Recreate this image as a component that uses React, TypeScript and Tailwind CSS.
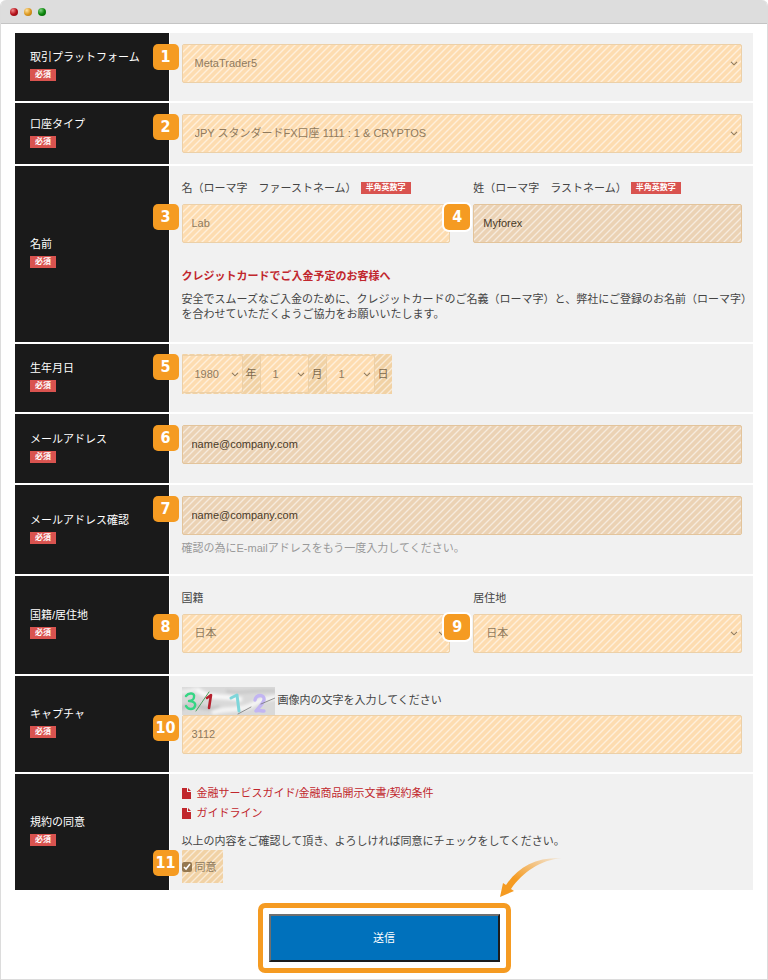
import type { ReactNode } from 'react';

const stripes =
  'bg-[image:linear-gradient(135deg,#ffffff8c_5%,transparent_9%,transparent_41%,#ffffff8c_45%,#ffffff8c_55%,transparent_59%,transparent_91%,#ffffff8c_95%)] bg-[length:7px_7px]';

const lightField = `${stripes} rounded-[2px] border border-[#ecd0a8] bg-[#fddcb0] text-[#8f7a5e]`;
const darkField = `${stripes} rounded-[2px] border border-[#e3c49b] bg-[#ebd2b4] text-[#4a3a28]`;

function StepNumber({ value, ring = false }: { value: number; ring?: boolean }) {
  return (
    <span
      className={`absolute top-0 -left-[29px] z-10 flex h-[26px] w-[26px] items-center justify-center rounded-[5px] bg-[#f59b22] font-['DejaVu_Sans_Condensed','DejaVu_Sans',sans-serif] text-[16px] leading-none font-bold text-white ${
        ring ? 'ring-2 ring-white' : ''
      }`}
    >
      {value}
    </span>
  );
}

function Tag({ children }: { children: ReactNode }) {
  return (
    <span className="inline-block bg-[#d9534f] px-[5px] text-[8px] leading-3 font-bold text-white">
      {children}
    </span>
  );
}

function Row({ label, className, children }: { label: string; className: string; children: ReactNode }) {
  return (
    <tr className="border-b-2 border-white last:border-b-0">
      <th scope="row" className="w-[154px] bg-[#1a1a1a] pb-1 pl-[15px] text-left align-middle font-normal text-white">
        <div className="mb-1 leading-4">{label}</div>
        <div className="flex">
          <Tag>必須</Tag>
        </div>
      </th>
      <td className={`border-l border-white bg-[#f1f1f1] pr-[11px] pl-3 align-top ${className}`}>{children}</td>
    </tr>
  );
}

function Chevron() {
  return (
    <svg
      viewBox="0 0 8 5"
      className="pointer-events-none absolute top-[17px] right-1 h-[5px] w-2"
      fill="none"
      stroke="#8f7a5e"
      strokeWidth="1.1"
    >
      <path d="M1 0.8l3 3 3-3" />
    </svg>
  );
}

function TextField({ id, label, value, dark = false }: { id: string; label: string; value: string; dark?: boolean }) {
  return (
    <input
      id={id}
      aria-label={label}
      defaultValue={value}
      className={`block h-[39px] w-full px-[9px] pb-px ${dark ? darkField : lightField}`}
    />
  );
}

function SelectField({ id, label, value }: { id: string; label: string; value: string }) {
  return (
    <div className="relative">
      <select id={id} aria-label={label} className={`block h-[39px] w-full appearance-none px-3 pb-px ${lightField}`}>
        <option>{value}</option>
      </select>
      <Chevron />
    </div>
  );
}

function FileIcon() {
  return (
    <svg viewBox="0 0 9 11" className="h-[11px] w-[9px]" fill="#c1272d">
      <path d="M0 0h5v4h4v7H0z" />
      <path d="M6 0l3 3H6z" />
    </svg>
  );
}

function Captcha() {
  return (
    <svg viewBox="0 0 93 28" className="h-7 w-[93px]" role="img" aria-label="3112">
      <defs>
        <filter id="soft">
          <feGaussianBlur stdDeviation="1.6" />
        </filter>
        <clipPath id="frame">
          <path d="M0 0h93v28H0z" />
        </clipPath>
      </defs>
      <rect width="93" height="28" fill="#d9d9d9" />
      <g clipPath="url(#frame)" fill="none">
        <g filter="url(#soft)">
          <path d="M-2 22C12 12 20 26 38 20" stroke="#c4c4c4" strokeWidth="4" />
          <path d="M14 2c14 12 30 5 46 11" stroke="#f8f8f8" strokeWidth="5" />
          <path d="M44 4c16 4 30-2 50 0" stroke="#c8c8c8" strokeWidth="3" />
          <path d="M30 26c12-6 28-1 40-8s14-6 26-8" stroke="#f4f4f4" strokeWidth="5" />
          <path d="M-2 6c6-4 12 0 16-5" stroke="#efefef" strokeWidth="4" />
        </g>
        <g strokeLinecap="round" strokeLinejoin="round">
          <path d="M4 9c3-4 9-3 8 1 0 3-3 4-5 4 4 0 7 2 6 5-1 4-7 4-9 0" stroke="#35d684" strokeWidth="2.4" />
          <path d="M14 24L27 5" stroke="#4e9e5f" />
          <path d="M25 11l4-3-2 13" stroke="#b5202d" strokeWidth="2.6" />
          <path d="M49 11l6-3 2 16" stroke="#7ed6da" strokeWidth="3" />
          <path d="M73 13c1-6 10-6 9 0-1 4-5 7-8 11 3-1 5 0 8 0" stroke="#c2b5f2" strokeWidth="3.4" />
          <path d="M56 27l13-7M79 17l14-6" stroke="#777777" strokeWidth="0.8" />
        </g>
      </g>
    </svg>
  );
}

function DatePart({ id, label, value, wide = false }: { id: string; label: string; value: string; wide?: boolean }) {
  return (
    <>
      <div className={`relative ${wide ? 'w-[61px]' : 'w-[49px]'}`}>
        <select id={id} className={`block h-[38px] w-full appearance-none px-3 ${lightField}`}>
          <option>{value}</option>
        </select>
        <Chevron />
      </div>
      <label htmlFor={id} className="w-[17px] text-center text-[#7d6a4f]">
        {label}
      </label>
    </>
  );
}

export default function App() {
  return (
    <div className="overflow-hidden rounded-t-md border-x border-b border-[#dcdcdc] bg-white font-['Liberation_Sans','Noto_Sans_CJK_JP',sans-serif] text-[11px] leading-4 text-[#444]">
      <header className="flex h-6 items-center gap-[6px] border-b border-[#c4c4c4] bg-[#dddddd] pl-[9px]">
        <span className="h-2 w-2 rounded-full bg-radial-[at_35%_30%] from-[#f28b8b] via-[#b5121b] to-[#7a0a10]" />
        <span className="h-2 w-2 rounded-full bg-radial-[at_35%_30%] from-[#ffe2a0] via-[#dd9a22] to-[#a86c0c]" />
        <span className="h-2 w-2 rounded-full bg-radial-[at_35%_30%] from-[#7fd07f] via-[#0c870c] to-[#075707]" />
      </header>

      <form className="px-[14px] pt-[9px]" onSubmit={(e) => e.preventDefault()}>
        <table className="w-full border-collapse">
          <tbody>
            <Row label="取引プラットフォーム" className="pt-[11px] pb-[18px]">
              <div className="relative">
                <StepNumber value={1} />
                <SelectField id="platform" label="取引プラットフォーム" value="MetaTrader5" />
              </div>
            </Row>

            <Row label="口座タイプ" className="py-[11px]">
              <div className="relative">
                <StepNumber value={2} />
                <SelectField id="account" label="口座タイプ" value="JPY スタンダードFX口座 1111 : 1 & CRYPTOS" />
              </div>
            </Row>

            <Row label="名前" className="pt-[14px] pb-5">
              <div className="grid grid-cols-2 gap-[23px]">
                <div>
                  <div className="mb-2 flex items-center gap-1">
                    <label htmlFor="first">名（ローマ字　ファーストネーム）</label>
                    <Tag>半角英数字</Tag>
                  </div>
                  <div className="relative">
                    <StepNumber value={3} />
                    <TextField id="first" label="名" value="Lab" />
                  </div>
                </div>
                <div>
                  <div className="mb-2 flex items-center gap-1">
                    <label htmlFor="last">姓（ローマ字　ラストネーム）</label>
                    <Tag>半角英数字</Tag>
                  </div>
                  <div className="relative">
                    <StepNumber value={4} ring />
                    <TextField id="last" label="姓" value="Myforex" dark />
                  </div>
                </div>
              </div>
              <p className="mt-[25px] mb-2 font-bold text-[#c1272d]">クレジットカードでご入金予定のお客様へ</p>
              <p className="-mr-[11px] leading-[15px]">
                安全でスムーズなご入金のために、クレジットカードのご名義（ローマ字）と、弊社にご登録のお名前（ローマ字）を合わせていただくようご協力をお願いいたします。
              </p>
            </Row>

            <Row label="生年月日" className="pt-[10px] pb-[18px]">
              <div className="relative">
                <StepNumber value={5} />
                <div className={`flex w-fit items-center bg-[#f1d2a5] py-px ${stripes}`}>
                  <DatePart id="year" label="年" value="1980" wide />
                  <DatePart id="month" label="月" value="1" />
                  <DatePart id="day" label="日" value="1" />
                </div>
              </div>
            </Row>

            <Row label="メールアドレス" className="pt-[11px] pb-[19px]">
              <div className="relative">
                <StepNumber value={6} />
                <TextField id="mail" label="メールアドレス" value="name@company.com" dark />
              </div>
            </Row>

            <Row label="メールアドレス確認" className="pt-[11px] pb-[18px]">
              <div className="relative">
                <StepNumber value={7} />
                <TextField id="mail2" label="メールアドレス確認" value="name@company.com" dark />
              </div>
              <p className="mt-[5px] text-[#999]">確認の為にE-mailアドレスをもう一度入力してください。</p>
            </Row>

            <Row label="国籍/居住地" className="pt-[14px] pb-[21px]">
              <div className="grid grid-cols-2 gap-[23px]">
                <div>
                  <label htmlFor="nation" className="mb-2 block">
                    国籍
                  </label>
                  <div className="relative">
                    <StepNumber value={8} />
                    <SelectField id="nation" label="国籍" value="日本" />
                  </div>
                </div>
                <div>
                  <label htmlFor="live" className="mb-2 block">
                    居住地
                  </label>
                  <div className="relative">
                    <StepNumber value={9} ring />
                    <SelectField id="live" label="居住地" value="日本" />
                  </div>
                </div>
              </div>
            </Row>

            <Row label="キャプチャ" className="pt-[11px] pb-[18px]">
              <div className="flex items-center gap-[3px]">
                <Captcha />
                <label htmlFor="captcha" className="pb-[2px]">
                  画像内の文字を入力してください
                </label>
              </div>
              <div className="relative">
                <StepNumber value={10} />
                <TextField id="captcha" label="キャプチャ" value="3112" />
              </div>
            </Row>

            <Row label="規約の同意" className="pt-[11px] pb-[7px]">
              <a href="#guide" className="mb-1 flex w-fit items-center gap-[6px] text-[#c1272d]">
                <FileIcon />
                金融サービスガイド/金融商品開示文書/契約条件
              </a>
              <a href="#guideline" className="mb-3 flex w-fit items-center gap-[6px] text-[#c1272d]">
                <FileIcon />
                ガイドライン
              </a>
              <p className="mb-px">以上の内容をご確認して頂き、よろしければ同意にチェックをしてください。</p>
              <div className="relative">
                <StepNumber value={11} />
                <label className={`flex h-[33px] w-[41px] items-center gap-[3px] bg-[#f1d2a5] text-[#8f7a5e] ${stripes}`}>
                  <input type="checkbox" defaultChecked className="h-[10px] w-[10px] accent-[#957850]" />
                  同意
                </label>
              </div>
            </Row>
          </tbody>
        </table>

        <div className="relative mx-auto mt-[13px] mb-[6px] w-[253px] rounded-[7px] border-[5px] border-[#f59b22] p-[6px]">
          <button
            type="submit"
            className="block h-12 w-full border-2 border-t-[#6f6f6f] border-r-[#1c1c1c] border-b-[#1c1c1c] border-l-[#6f6f6f] bg-[#0071bc] text-white"
          >
            送信
          </button>
          <svg viewBox="0 0 62 42" className="absolute -top-[51px] -right-[56px] h-[42px] w-[62px]">
            <defs>
              <linearGradient id="tail" x1="0" y1="1" x2="1" y2="0">
                <stop offset="0.35" stopColor="#f59b22" />
                <stop offset="1" stopColor="#f59b22" stopOpacity="0.1" />
              </linearGradient>
            </defs>
            <path d="M0 40L3 26L6 28C18 10 36 0 62 1C40 3 23 15 11 32L14 34Z" fill="url(#tail)" />
          </svg>
        </div>
      </form>
    </div>
  );
}
